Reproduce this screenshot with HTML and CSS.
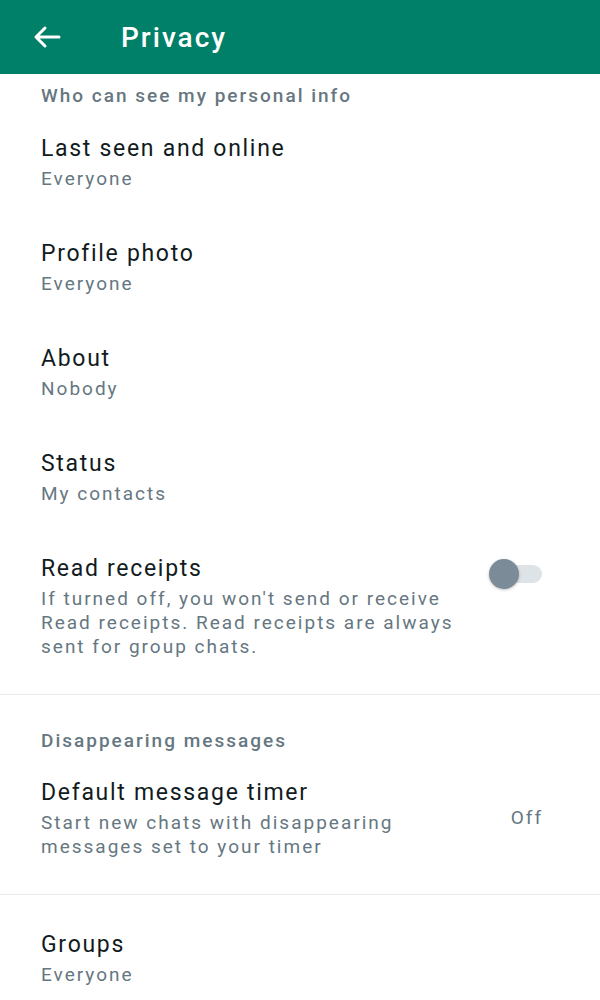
FILE: index.html
```html
<!DOCTYPE html>
<html>
<head>
<meta charset="utf-8">
<link rel="stylesheet" href="styles.css">
</head>
<body>
<header class="appbar">
  <svg class="back" width="28" height="24" viewBox="0 0 28 24">
    <path d="M26 12H3M12 3L3 12l9 9" fill="none" stroke="#fff" stroke-width="3" stroke-linecap="round" stroke-linejoin="round"/>
  </svg>
  <h1 class="title">Privacy</h1>
</header>
<main>
  <section class="group">
    <div class="section-title">Who can see my personal info</div>
    <div class="item"><div class="item-title">Last seen and online</div><div class="item-sub">Everyone</div></div>
    <div class="item"><div class="item-title">Profile photo</div><div class="item-sub">Everyone</div></div>
    <div class="item"><div class="item-title">About</div><div class="item-sub">Nobody</div></div>
    <div class="item"><div class="item-title">Status</div><div class="item-sub">My contacts</div></div>
    <div class="item row">
      <div class="text">
        <div class="item-title">Read receipts</div>
        <div class="item-sub desc">If turned off, you won't send or receive<br>Read receipts. Read receipts are always<br>sent for group chats.</div>
      </div>
      <div class="switch"><span class="track"></span><span class="thumb"></span></div>
    </div>
  </section>
  <section class="group bordered">
    <div class="section-title">Disappearing messages</div>
    <div class="item row">
      <div class="text">
        <div class="item-title">Default message timer</div>
        <div class="item-sub desc">Start new chats with disappearing<br>messages set to your timer</div>
      </div>
      <div class="value">Off</div>
    </div>
  </section>
  <section class="group bordered">
    <div class="item"><div class="item-title">Groups</div><div class="item-sub">Everyone</div></div>
  </section>
</main>
</body>
</html>
```
FILE: styles.css
```css
* { box-sizing: border-box; }
body {
  margin: 0;
  background: #fff;
  font-family: Roboto, "Noto Sans", sans-serif;
  overflow: hidden;
}
.appbar {
  height: 74px;
  background: #008069;
  display: flex;
  align-items: center;
  padding-left: 33px;
}
.back { display: block; }
.title {
  margin: 0 0 0 60px;
  color: #fff;
  font-size: 28px;
  font-weight: 500;
  letter-spacing: 2px;
}
.group { padding: 0 0 0 41px; }
.group.bordered { border-top: 1px solid #e9ecee; }
.section-title {
  color: #667781;
  font-size: 19px;
  font-weight: 500;
  letter-spacing: 2px;
  height: 44px;
  padding-top: 10px;
}
.group.bordered .section-title { height: 67px; padding-top: 34px; }
.item {
  padding-top: 16px;
  height: 105px;
}
.item-title {
  color: #111b21;
  font-size: 23px;
  line-height: 30px;
  letter-spacing: 1.7px;
}
.item-sub {
  color: #667781;
  font-size: 19px;
  line-height: 30px;
  letter-spacing: 2px;
}
.item-sub.desc { line-height: 24px; margin-top: 3px; white-space: nowrap; }
.row {
  display: flex;
  align-items: flex-start;
  padding-right: 58px;
}
.row .text { flex: 1; }
.item.row { height: auto; padding-bottom: 35px; }
.switch {
  position: relative;
  width: 54px;
  height: 32px;
  margin-left: auto;
  margin-top: 4px;
}
.track {
  position: absolute;
  left: 14px; right: 0; top: 7px;
  height: 18px;
  border-radius: 9px;
  background: #dde3e6;
}
.thumb {
  position: absolute;
  left: 1px; top: 1px;
  width: 30px; height: 30px;
  border-radius: 50%;
  background: #7b8b97;
  box-shadow: 0 1px 3px rgba(0,0,0,0.25);
}
.value {
  margin-left: auto;
  margin-top: 28px;
  color: #667781;
  font-size: 19px;
  letter-spacing: 2px;
  margin-right: -1px;
}
.group:last-child .item { padding-top: 35px; }
```
